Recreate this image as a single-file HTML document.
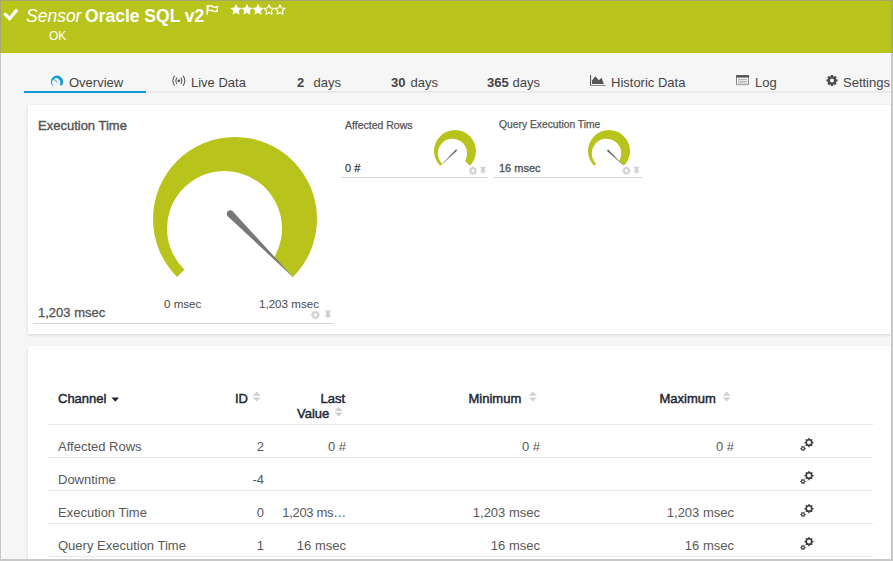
<!DOCTYPE html>
<html><head><meta charset="utf-8">
<style>
*{margin:0;padding:0;box-sizing:border-box}
html,body{width:893px;height:561px;overflow:hidden;background:#f6f6f6;font-family:"Liberation Sans",sans-serif}
.abs{position:absolute;white-space:nowrap;line-height:1}
#hdr{position:absolute;left:0;top:0;width:893px;height:53px;background:#b8c41c}
.w{color:#fff}
.tab{position:absolute;top:76px;font-size:13px;color:#444;white-space:nowrap;line-height:1}
.panel{position:absolute;background:#fff;box-shadow:0 1px 3px rgba(0,0,0,0.13)}
.g{color:#555}
.th{position:absolute;font-size:13px;-webkit-text-stroke:0.45px #1c2733;color:#1c2733;white-space:nowrap;line-height:1}
.td{position:absolute;font-size:13px;color:#585858;white-space:nowrap;line-height:1}
.r{text-align:right}
.hl{position:absolute;height:1px;background:#e8e8e8}
svg.ov{position:absolute;left:0;top:0}
</style></head><body>
<div id="hdr"></div>
<div class="abs w" style="left:26px;top:8px;font-size:17.5px;font-style:italic">Sensor</div>
<div class="abs w" style="left:85px;top:7.5px;font-size:17.5px;font-weight:bold">Oracle SQL v2</div>
<div class="abs w" style="left:49px;top:30px;font-size:12px">OK</div>

<!-- tabs -->
<div class="hl" style="left:24px;top:91px;width:869px;height:2px;background:#e9e9e9"></div>
<div class="abs" style="left:24px;top:91px;width:122px;height:2px;background:#0f9bd7"></div>
<div class="tab" style="left:69px">Overview</div>
<div class="tab" style="left:191px">Live Data</div>
<div class="tab" style="left:297px"><b>2</b></div><div class="tab" style="left:313.5px">days</div>
<div class="tab" style="left:391px"><b>30</b></div><div class="tab" style="left:410.5px">days</div>
<div class="tab" style="left:487px"><b>365</b></div><div class="tab" style="left:512.5px">days</div>
<div class="tab" style="left:611px">Historic Data</div>
<div class="tab" style="left:755px">Log</div>
<div class="tab" style="left:843px">Settings</div>

<!-- panel 1 -->
<div class="panel" style="left:28px;top:105px;width:865px;height:229px"></div>
<div class="abs g" style="left:38px;top:119px;font-size:13px;-webkit-text-stroke:0.4px #555">Execution Time</div>
<div class="abs g" style="left:38px;top:305.5px;font-size:13px;-webkit-text-stroke:0.3px #555">1,203 msec</div>
<div class="abs g" style="left:164px;top:297.5px;font-size:11.6px;color:#4a4a4a">0 msec</div>
<div class="abs g" style="left:259px;top:297.5px;font-size:11.6px;color:#4a4a4a">1,203 msec</div>
<div class="hl" style="left:33px;top:323px;width:301px;background:#d6d6d6"></div>

<div class="abs g" style="left:345px;top:120px;font-size:10.5px;-webkit-text-stroke:0.25px #555">Affected Rows</div>
<div class="abs g" style="left:345px;top:163px;font-size:11px;-webkit-text-stroke:0.35px #555">0 #</div>
<div class="hl" style="left:341px;top:177px;width:147px;background:#d6d6d6"></div>
<div class="abs g" style="left:499px;top:120px;font-size:10.3px;-webkit-text-stroke:0.25px #555">Query Execution Time</div>
<div class="abs g" style="left:499px;top:163px;font-size:11px;-webkit-text-stroke:0.35px #555">16 msec</div>
<div class="hl" style="left:494px;top:177px;width:148px;background:#d6d6d6"></div>

<!-- panel 2 -->
<div class="panel" style="left:28px;top:346px;width:865px;height:215px"></div>
<div class="th" style="left:58px;top:392px">Channel</div>
<div class="th" style="left:235px;top:392px">ID</div>
<div class="th" style="left:320.5px;top:392px">Last</div>
<div class="th" style="left:297px;top:407px">Value</div>
<div class="th" style="left:468.5px;top:392px">Minimum</div>
<div class="th" style="left:659.5px;top:392px">Maximum</div>
<div class="hl" style="left:48px;top:424px;width:825px"></div>
<div class="hl" style="left:48px;top:457px;width:825px"></div>
<div class="hl" style="left:48px;top:490px;width:825px"></div>
<div class="hl" style="left:48px;top:523px;width:825px"></div>
<div class="hl" style="left:48px;top:556px;width:825px"></div>

<div class="td" style="left:58px;top:440px">Affected Rows</div>
<div class="td" style="left:58px;top:473px">Downtime</div>
<div class="td" style="left:58px;top:506px">Execution Time</div>
<div class="td" style="left:58px;top:539px">Query Execution Time</div>

<div class="td r" style="left:200px;width:64px;top:440px">2</div>
<div class="td r" style="left:200px;width:64px;top:473px">-4</div>
<div class="td r" style="left:200px;width:64px;top:506px">0</div>
<div class="td r" style="left:200px;width:64px;top:539px">1</div>

<div class="td r" style="left:265px;width:81px;top:440px">0 #</div>
<div class="td r" style="left:265px;width:81px;top:506px;letter-spacing:-0.3px">1,203 ms…</div>
<div class="td r" style="left:265px;width:81px;top:539px">16 msec</div>

<div class="td r" style="left:400px;width:140px;top:440px">0 #</div>
<div class="td r" style="left:400px;width:140px;top:506px">1,203 msec</div>
<div class="td r" style="left:400px;width:140px;top:539px">16 msec</div>

<div class="td r" style="left:594px;width:140px;top:440px">0 #</div>
<div class="td r" style="left:594px;width:140px;top:506px">1,203 msec</div>
<div class="td r" style="left:594px;width:140px;top:539px">16 msec</div>

<svg class="ov" width="893" height="561" viewBox="0 0 893 561">
<defs>
<path id="gear" fill-rule="evenodd" d="M4.90,-0.98 L4.90,0.98 L3.64,1.10 L3.35,1.79 L4.16,2.78 L2.78,4.16 L1.79,3.35 L1.10,3.64 L0.98,4.90 L-0.98,4.90 L-1.10,3.64 L-1.79,3.35 L-2.78,4.16 L-4.16,2.78 L-3.35,1.79 L-3.64,1.10 L-4.90,0.98 L-4.90,-0.98 L-3.64,-1.10 L-3.35,-1.79 L-4.16,-2.78 L-2.78,-4.16 L-1.79,-3.35 L-1.10,-3.64 L-0.98,-4.90 L0.98,-4.90 L1.10,-3.64 L1.79,-3.35 L2.78,-4.16 L4.16,-2.78 L3.35,-1.79 L3.64,-1.10Z M-1.80,0.00 a1.80,1.80 0 1 0 3.60,0 a1.80,1.80 0 1 0 -3.60,0Z"/>
<path id="pin" d="M-3,-4.5 H3 V-3.5 H2 V0 L3.5,2 H0.6 L0,5 L-0.6,2 H-3.5 L-2,0 V-3.5 H-3Z"/>
<path id="sort" d="M-4,-0.8 L0,-5 L4,-0.8Z M-4,0.8 L0,5 L4,0.8Z"/>
<path id="cog" fill-rule="evenodd" d="M4.55,-0.65 L4.55,0.65 L3.64,0.65 L3.04,2.12 L3.68,2.76 L2.76,3.68 L2.12,3.04 L0.65,3.64 L0.65,4.55 L-0.65,4.55 L-0.65,3.64 L-2.12,3.04 L-2.76,3.68 L-3.68,2.76 L-3.04,2.12 L-3.64,0.65 L-4.55,0.65 L-4.55,-0.65 L-3.64,-0.65 L-3.04,-2.12 L-3.68,-2.76 L-2.76,-3.68 L-2.12,-3.04 L-0.65,-3.64 L-0.65,-4.55 L0.65,-4.55 L0.65,-3.64 L2.12,-3.04 L2.76,-3.68 L3.68,-2.76 L3.04,-2.12 L3.64,-0.65Z M-2.00,0 a2.00,2.00 0 1 0 4.00,0 a2.00,2.00 0 1 0 -4.00,0Z"/>
<path id="cogs" fill-rule="evenodd" d="M2.65,-0.51 L2.65,0.51 L2.04,0.49 L1.45,1.52 L1.76,2.04 L0.89,2.55 L0.60,2.01 L-0.60,2.01 L-0.89,2.55 L-1.76,2.04 L-1.45,1.52 L-2.04,0.49 L-2.65,0.51 L-2.65,-0.51 L-2.04,-0.49 L-1.45,-1.52 L-1.76,-2.04 L-0.89,-2.55 L-0.60,-2.01 L0.60,-2.01 L0.89,-2.55 L1.76,-2.04 L1.45,-1.52 L2.04,-0.49Z M-0.90,0 a0.90,0.90 0 1 0 1.80,0 a0.90,0.90 0 1 0 -1.80,0Z"/>
</defs>
<!-- borders -->
<rect x="0" y="0" width="893" height="1" fill="#a4a86c"/>
<rect x="0" y="0" width="1" height="53" fill="#a4a86c"/>
<rect x="891" y="0" width="2" height="53" fill="#a8ab62"/>
<rect x="0" y="53" width="1" height="508" fill="#c6c6c6"/>
<rect x="891" y="53" width="2" height="508" fill="#c8c8c8"/>
<rect x="0" y="559" width="893" height="2" fill="#c8c8c8"/>
<!-- check -->
<path d="M4.3,13.3 L9.6,18.6 L17.2,9.6" stroke="#fff" stroke-width="3.2" fill="none"/>
<!-- flag -->
<path d="M207.2,5 V14.8" stroke="#fff" stroke-width="1.6"/>
<path d="M208,6.2 Q210.5,5.2 212.8,6.6 T217.3,6.4 V11 Q215,12 212.8,10.8 T208,10.8Z" stroke="#fff" stroke-width="1.4" fill="none" stroke-linejoin="round"/>
<!-- stars -->
<g transform="translate(230.5,4.2)">
<polygon fill="#fff" points="5.50,-0.40 7.20,3.25 11.21,3.75 8.26,6.50 9.03,10.45 5.50,8.50 1.97,10.45 2.74,6.50 -0.21,3.75 3.80,3.25"/>
<polygon fill="#fff" points="16.50,-0.40 18.20,3.25 22.21,3.75 19.26,6.50 20.03,10.45 16.50,8.50 12.97,10.45 13.74,6.50 10.79,3.75 14.80,3.25"/>
<polygon fill="#fff" points="27.50,-0.40 29.20,3.25 33.21,3.75 30.26,6.50 31.03,10.45 27.50,8.50 23.97,10.45 24.74,6.50 21.79,3.75 25.80,3.25"/>
<polygon fill="none" stroke="#fff" stroke-width="1.1" stroke-linejoin="round" points="38.50,0.60 39.97,3.78 43.45,4.19 40.88,6.57 41.56,10.01 38.50,8.30 35.44,10.01 36.12,6.57 33.55,4.19 37.03,3.78"/>
<polygon fill="none" stroke="#fff" stroke-width="1.1" stroke-linejoin="round" points="49.50,0.60 50.97,3.78 54.45,4.19 51.88,6.57 52.56,10.01 49.50,8.30 46.44,10.01 47.12,6.57 44.55,4.19 48.03,3.78"/>
</g>

<!-- tab icons -->
<path d="M52.69,86.01 A6.10,6.10 0 1 1 61.31,86.01 L59.75,84.45 A4.10,4.10 0 1 0 53.35,85.35 Z" fill="#0f9bd7"/>
<path d="M53.2,78.6 L57.2,82.2" stroke="#0f9bd7" stroke-width="0.9"/>
<g fill="none" stroke="#555" stroke-width="1.05">
<path d="M174.6,75.8 Q171.2,80.8 174.6,85.8"/>
<path d="M176.9,77.6 Q174.8,80.8 176.9,84"/>
<path d="M183.1,75.8 Q186.5,80.8 183.1,85.8"/>
<path d="M180.8,77.6 Q182.9,80.8 180.8,84"/>
</g>
<circle cx="178.85" cy="80.8" r="1.4" fill="#555"/>
<!-- historic -->
<rect x="590" y="75" width="1.1" height="11" fill="#555"/>
<rect x="590" y="85" width="15.5" height="1" fill="#8a8a8a"/>
<path d="M592,84 L592,80.6 L595.3,76.2 L598.8,80.2 L601.6,77.8 L603.9,84Z" fill="#555"/>
<!-- log -->
<rect x="736.5" y="75.5" width="12" height="9" fill="#fafafa" stroke="#666" stroke-width="0.8"/>
<rect x="736.2" y="75.2" width="12.6" height="2.4" fill="#555"/>
<rect x="736.2" y="84" width="12.6" height="1.2" fill="#aaa"/>
<path d="M738.3,79.4 H747 M738.3,81.3 H747 M738.3,83 H747" stroke="#999" stroke-width="0.8"/>
<path d="M738.6,78.5 V84" stroke="#bbb" stroke-width="0.6"/>
<!-- settings gear -->
<use href="#gear" transform="translate(832,80.5) scale(1.12)" fill="#4a4a4a"/>

<!-- big gauge -->
<path d="M177.02,276.98 A82.00,82.00 0 1 1 292.98,276.98 L273.91,257.91 A57.50,57.50 0 1 0 184.34,269.66 Z" fill="#b8c41c"/>
<path d="M227.72,216.16 L294.3,278.4 L232.68,211.24 A3.5,3.5 0 0 0 227.72,216.16Z" fill="#777"/>
<!-- small gauge 1 -->
<path d="M440.15,165.85 A21.00,21.00 0 1 1 469.85,165.85 L464.94,160.94 A14.60,14.60 0 1 0 442.28,163.72 Z" fill="#b8c41c"/>
<path d="M456,149.2 L440.2,166 L457.3,150.6Z" fill="#6e6e6e"/>
<!-- small gauge 2 -->
<path d="M594.15,165.85 A21.00,21.00 0 1 1 623.85,165.85 L619.05,161.05 A14.70,14.70 0 1 0 596.16,163.84 Z" fill="#b8c41c"/>
<path d="M606.8,150.7 L623.9,166 L608.2,149.3Z" fill="#6e6e6e"/>

<!-- panel gear/pin light icons -->
<g fill="#d2d2d6">
<use href="#gear" transform="translate(315.5,314.8) scale(0.9)"/>
<use href="#pin" transform="translate(328,315)"/>
<use href="#gear" transform="translate(473,170.6) scale(0.85)"/>
<use href="#pin" transform="translate(483,170.8) scale(0.9)"/>
<use href="#gear" transform="translate(626.5,170.6) scale(0.85)"/>
<use href="#pin" transform="translate(636.5,170.8) scale(0.9)"/>
</g>

<!-- sort icons -->
<path d="M111.5,397.5 H119 L115.25,401.8Z" fill="#1c2733"/>
<g fill="#d0d0d0">
<use href="#sort" transform="translate(256.7,396.6)"/>
<use href="#sort" transform="translate(338.7,411.8)"/>
<use href="#sort" transform="translate(532.8,396.6)"/>
<use href="#sort" transform="translate(726.7,396.6)"/>
</g>

<!-- row gears -->
<g fill="#3a3a3a">
<use href="#cog" transform="translate(809,442.6)"/>
<use href="#cogs" transform="translate(803,448.4)"/>
<use href="#cog" transform="translate(809,475.6)"/>
<use href="#cogs" transform="translate(803,481.4)"/>
<use href="#cog" transform="translate(809,508.6)"/>
<use href="#cogs" transform="translate(803,514.4)"/>
<use href="#cog" transform="translate(809,541.6)"/>
<use href="#cogs" transform="translate(803,547.4)"/>
</g>
</svg>
</body></html>
